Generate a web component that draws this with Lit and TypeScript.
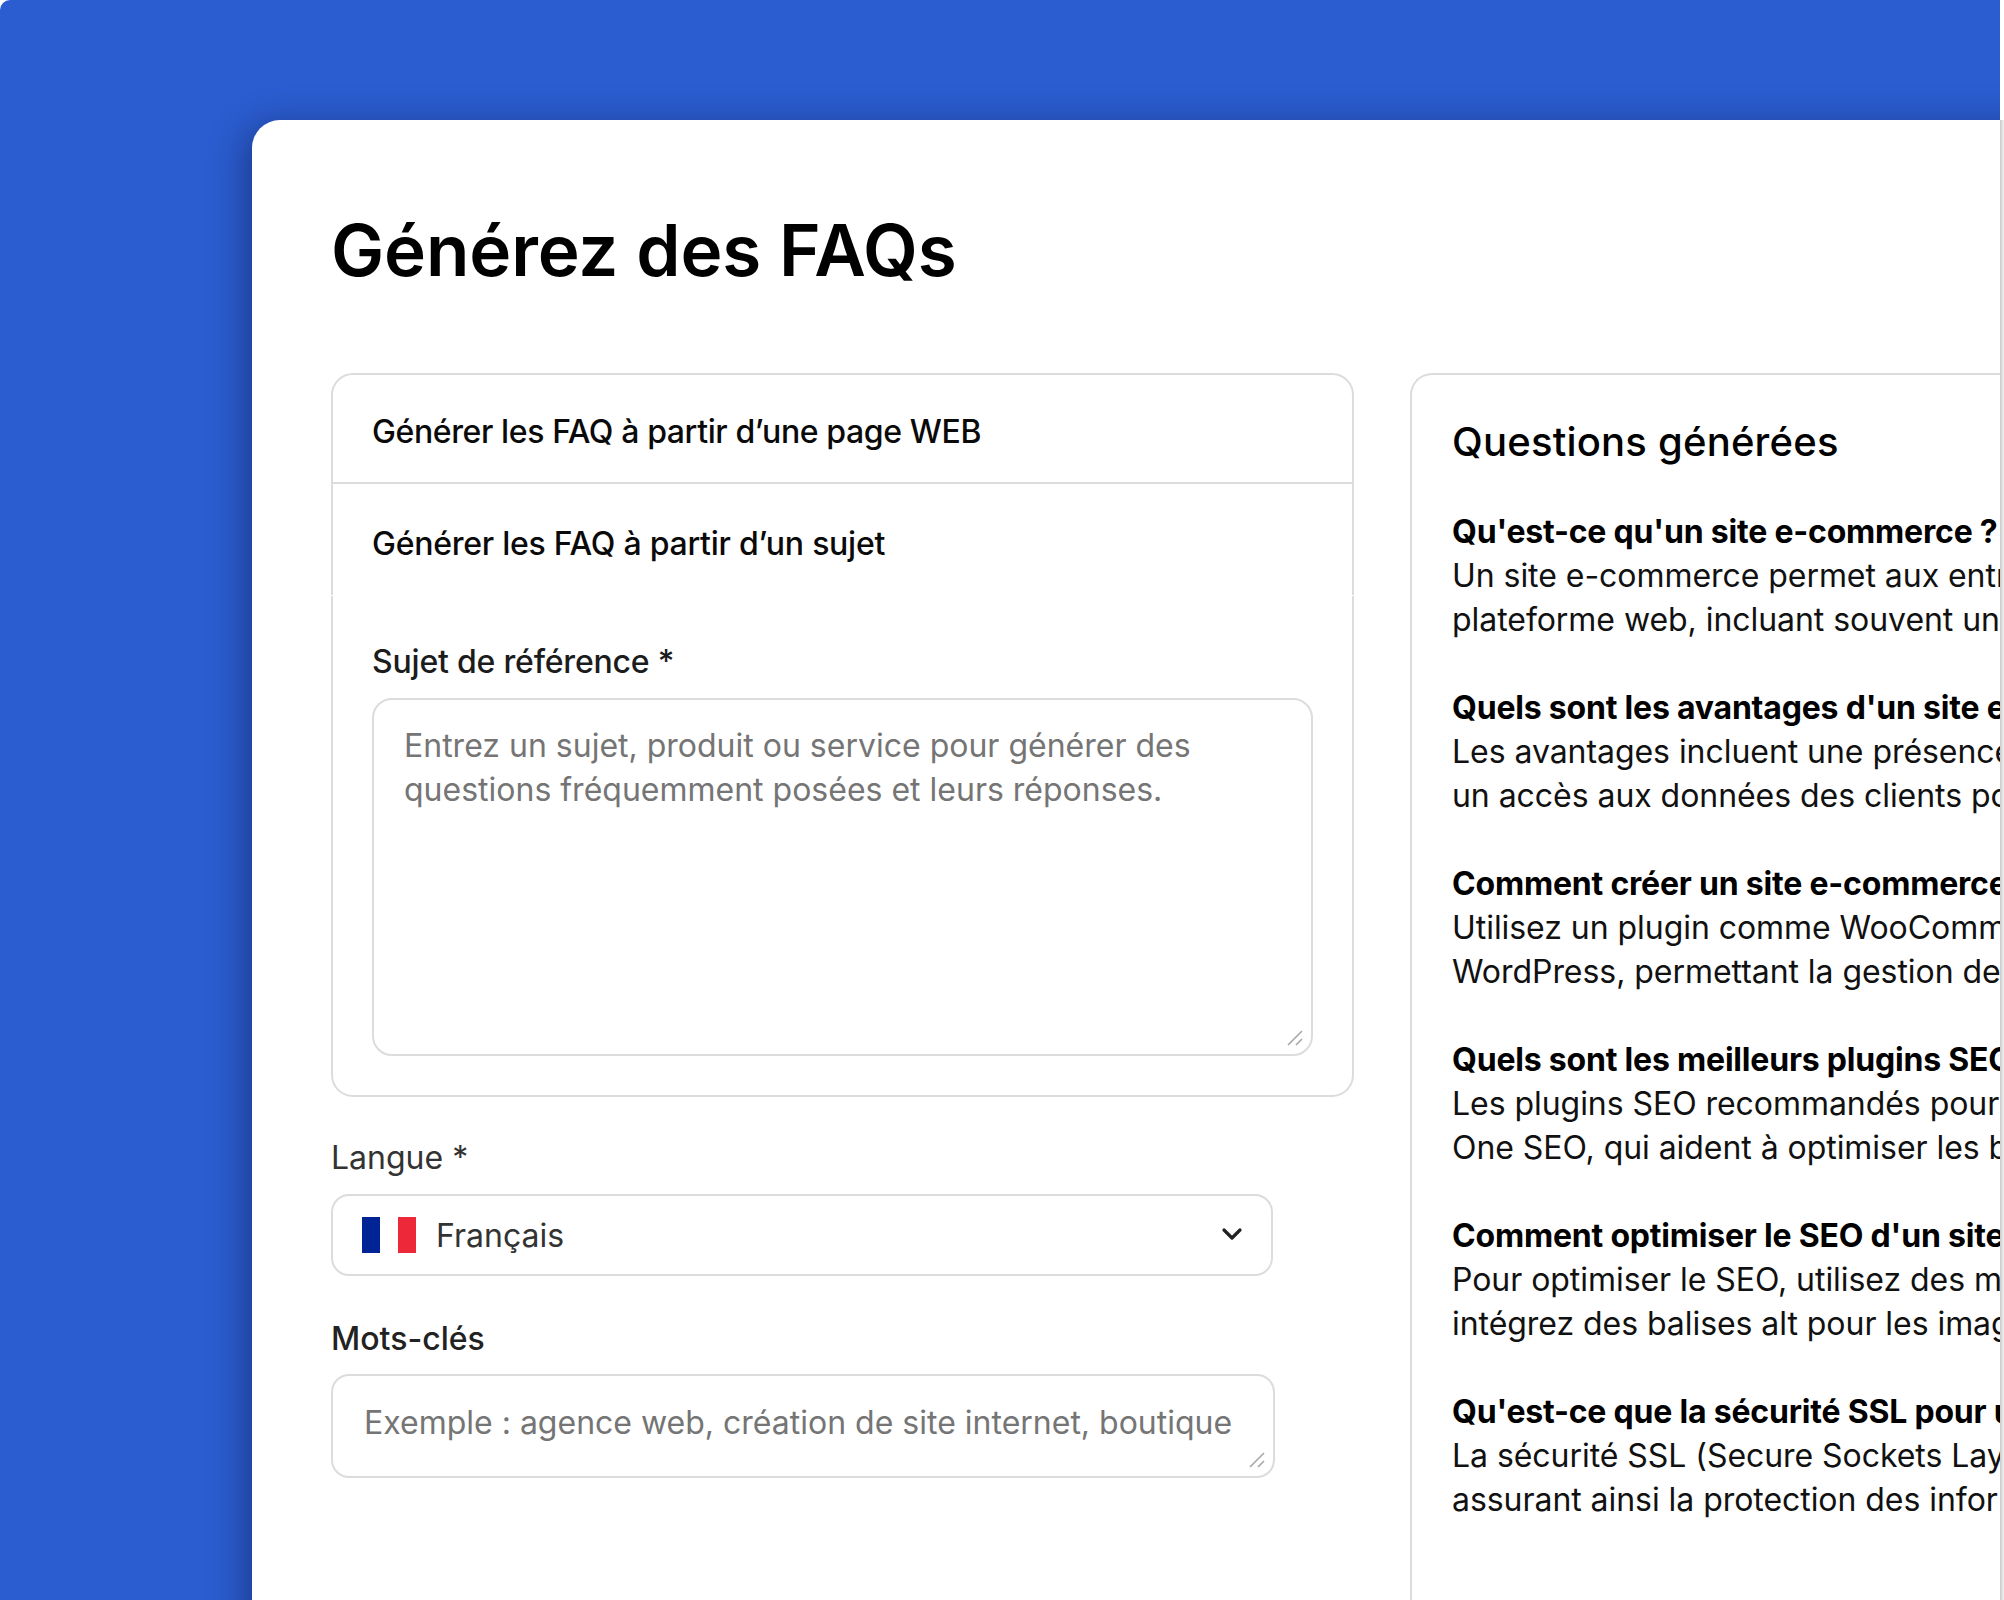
import { LitElement, html, css } from "lit";
import { customElement } from "lit/decorators.js";

const ITEMS: [string, string, string][] = [
  ["Qu'est-ce qu'un site e-commerce ?", "Un site e-commerce permet aux entreprises de vendre en ligne", "plateforme web, incluant souvent un panier et un paiement"],
  ["Quels sont les avantages d'un site e-commerce ?", "Les avantages incluent une présence en ligne permanente", "un accès aux données des clients pour mieux les servir"],
  ["Comment créer un site e-commerce ?", "Utilisez un plugin comme WooCommerce sur votre site", "WordPress, permettant la gestion des produits et ventes"],
  ["Quels sont les meilleurs plugins SEO ?", "Les plugins SEO recommandés pour WordPress sont Yoast", "One SEO, qui aident à optimiser les balises et le contenu"],
  ["Comment optimiser le SEO d'un site ?", "Pour optimiser le SEO, utilisez des mots-clés pertinents", "intégrez des balises alt pour les images de vos pages"],
  ["Qu'est-ce que la sécurité SSL pour un site ?", "La sécurité SSL (Secure Sockets Layer) chiffre les données", "assurant ainsi la protection des informations sensibles"],
];

const handle = html`<svg class="grip" width="16" height="16" viewBox="0 0 16 16" fill="none" stroke="#a8a8a8" stroke-width="1.6"><path d="M1 15 15 1M9 15l6-6"/></svg>`;

@customElement("app-root")
export class AppRoot extends LitElement {
  static styles = css`
    :host { display: flex; width: 2004px; height: 1600px; overflow: hidden; background: #fff; font-family: Inter, "Liberation Sans", sans-serif; color: #000; }
    .stage { width: 2000px; height: 1600px; flex: none; background: #2b5dd0; border-radius: 10px 0 0 0; padding: 120px 0 0 252px; box-sizing: border-box; overflow: hidden; }
    .edge { flex: 1; margin-top: 120px; background: linear-gradient(90deg, #c9c9c9, #f2f2f2); }
    .card { width: 1800px; height: 1600px; box-sizing: border-box; background: #fff; border-radius: 28px 0 0 0; box-shadow: -6px 6px 36px rgba(0,0,30,.38); padding: 0 0 0 79px; }
    h1 { margin: 0; height: 253px; padding-top: 84px; box-sizing: border-box; font-size: 71px; line-height: 92px; font-weight: 600; letter-spacing: -.1px; color: #000; }
    .cols { display: flex; gap: 56px; align-items: flex-start; }
    .left { width: 1023px; flex: none; }
    .acc-head { display: flex; align-items: center; box-sizing: border-box; padding-left: 39px; border: solid #dcdcdc; border-width: 0 2px; font-size: 32px; font-weight: 500; letter-spacing: -.39px; color: #0a0a0a; }
    .acc-head.first { height: 111px; padding-top: 5px; border-top-width: 2px; border-bottom-width: 2px; border-radius: 22px 22px 0 0; }
    .acc-head.second { height: 111px; padding-top: 8px; letter-spacing: -.25px; }
    .acc-body { margin-top: 1px; box-sizing: border-box; height: 501px; padding: 0 39px; border: solid #dcdcdc; border-width: 0 2px 2px; border-radius: 0 0 22px 22px; }
    .subject-label { padding-top: 44px; height: 102px; box-sizing: border-box; font-size: 32px; line-height: 44px; font-weight: 500; letter-spacing: -.2px; color: #1c1c1c; }
    .area { position: relative; box-sizing: border-box; border: 2px solid #dcdcdc; background: #fff; color: #757575; font-size: 32px; line-height: 44px; }
    .subject { width: 941px; height: 358px; border-radius: 20px; padding: 24px 30px; }
    .grip { position: absolute; right: 8px; bottom: 8px; }
    .field-label { font-size: 32px; line-height: 44px; color: #333; }
    .lang-label { margin-top: 39px; }
    .select { margin-top: 14px; width: 942px; height: 82px; box-sizing: border-box; border: 2px solid #dcdcdc; border-radius: 18px; display: flex; align-items: center; padding: 0 27px 0 29px; color: #333; font-size: 32px; }
    .flag { display: flex; width: 54px; height: 36px; margin-right: 20px; flex: none; }
    .flag i { flex: 1; }
    .blue { background: #002395; } .white { background: #fff; } .red { background: #ed2939; }
    .lang { flex: 1; }
    .kw-label { margin-top: 41px; font-weight: 450; color: #222; }
    .keywords { margin-top: 13px; width: 944px; height: 104px; border-radius: 18px; padding: 25px 31px; white-space: nowrap; overflow: hidden; }
    .right { width: 900px; height: 1300px; flex: none; box-sizing: border-box; border: 2px solid #dcdcdc; border-right: 0; border-bottom: 0; border-radius: 22px 0 0 0; padding: 40px 0 0 40px; }
    h2 { margin: 0 0 41px; font-size: 40px; line-height: 54px; font-weight: 500; letter-spacing: .2px; color: #000; }
    .qa { margin: 0 0 44px; font-size: 32px; line-height: 44px; white-space: nowrap; color: #111; letter-spacing: -.05px; }
    .qa b { display: block; font-weight: 700; color: #000; letter-spacing: -.2px; }
    .qa span { display: block; }
  `;
  render() {
    return html`
      <div class="stage">
        <main class="card">
          <h1>Générez des FAQs</h1>
          <div class="cols">
            <section class="left">
              <div class="acc-head first">Générer les FAQ à partir d’une page WEB</div>
              <div class="acc-head second">Générer les FAQ à partir d’un sujet</div>
              <div class="acc-body">
                <div class="subject-label">Sujet de référence *</div>
                <div class="area subject">Entrez un sujet, produit ou service pour générer des questions fréquemment posées et leurs réponses.${handle}</div>
              </div>
              <div class="field-label lang-label">Langue *</div>
              <div class="select">
                <span class="flag"><i class="blue"></i><i class="white"></i><i class="red"></i></span>
                <span class="lang">Français</span>
                <svg width="24" height="16" viewBox="0 0 24 16" fill="none" stroke="#222" stroke-width="3.2" stroke-linecap="round" stroke-linejoin="round"><path d="M4 3l8 8 8-8"/></svg>
              </div>
              <div class="field-label kw-label">Mots-clés</div>
              <div class="area keywords">Exemple : agence web, création de site internet, boutique${handle}</div>
            </section>
            <section class="right">
              <h2>Questions générées</h2>
              ${ITEMS.map(([q, a, b]) => html`<div class="qa"><b>${q}</b><span>${a}</span><span>${b}</span></div>`)}
            </section>
          </div>
        </main>
      </div>
      <div class="edge"></div>
    `;
  }
}
